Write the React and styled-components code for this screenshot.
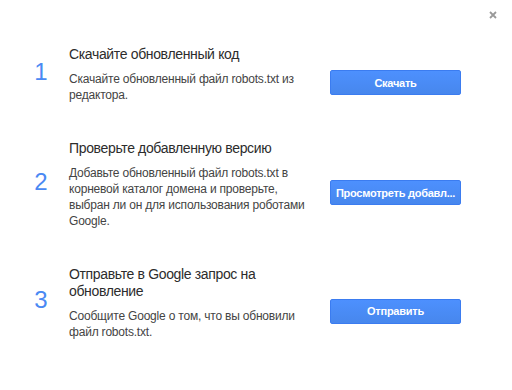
import React from "react"
import styled, { createGlobalStyle } from "styled-components"

const GlobalStyle = createGlobalStyle`
  html, body {
    margin: 0;
    padding: 0;
    background: #ffffff;
  }
  body {
    font-family: "Liberation Sans", Arial, sans-serif;
  }
`

const steps = [
  {
    n: 1,
    title: "Скачайте обновленный код",
    text: "Скачайте обновленный файл robots.txt из редактора.",
    action: "Скачать",
  },
  {
    n: 2,
    title: "Проверьте добавленную версию",
    text: "Добавьте обновленный файл robots.txt в корневой каталог домена и проверьте, выбран ли он для использования роботами Google.",
    action: "Просмотреть добавл...",
  },
  {
    n: 3,
    title: "Отправьте в Google запрос на обновление",
    text: "Сообщите Google о том, что вы обновили файл robots.txt.",
    action: "Отправить",
  },
]

export default function App() {
  return (
    <>
      <GlobalStyle />
      <Dialog>
        <Close aria-label="Закрыть">
          <svg width="8" height="8" viewBox="0 0 8 8">
            <path d="M1 1 L7 7 M7 1 L1 7" stroke="#999999" strokeWidth="1.8" />
          </svg>
        </Close>
        <Steps>
          {steps.map((s) => (
            <Step key={s.n}>
              <Number>{s.n}</Number>
              <TextWrapper>
                <Title>{s.title}</Title>
                <Description>{s.text}</Description>
              </TextWrapper>
              <Button>{s.action}</Button>
            </Step>
          ))}
        </Steps>
      </Dialog>
    </>
  )
}

const Dialog = styled.div`
  position: relative;
  width: 512px;
  height: 390px;
  box-sizing: border-box;
  padding: 46px 0 0 20px;
`

const Close = styled.button`
  position: absolute;
  top: 11px;
  right: 15px;
  width: 8px;
  height: 8px;
  padding: 0;
  border: none;
  background: none;
  display: grid;
  place-items: center;
`

const Steps = styled.div`
  display: flex;
  flex-direction: column;
  gap: 37px;
`

const Step = styled.div`
  display: flex;
  align-items: center;
`

const Number = styled.div`
  width: 42px;
  margin-right: 7px;
  margin-bottom: 6px;
  text-align: center;
  font-size: 24px;
  line-height: 24px;
  color: #4a89f3;
`

const TextWrapper = styled.div`
  width: 245px;
  display: flex;
  flex-direction: column;
  gap: 8px;
`

const Title = styled.div`
  font-size: 14px;
  line-height: 17px;
  letter-spacing: -0.35px;
  color: #2c2c2c;
`

const Description = styled.div`
  font-size: 12px;
  line-height: 16px;
  letter-spacing: -0.2px;
  color: #444444;
`

const Button = styled.button`
  margin-left: 16px;
  margin-top: 16px;
  width: 131px;
  height: 25px;
  padding: 0 4px;
  border: 1px solid #3b7cf0;
  border-radius: 2px;
  background: linear-gradient(180deg, #4d90fe 0%, #4787ed 100%);
  color: #ffffff;
  font-family: "Liberation Sans", Arial, sans-serif;
  font-size: 11px;
  font-weight: bold;
  letter-spacing: -0.25px;
  white-space: nowrap;
  overflow: hidden;
`
